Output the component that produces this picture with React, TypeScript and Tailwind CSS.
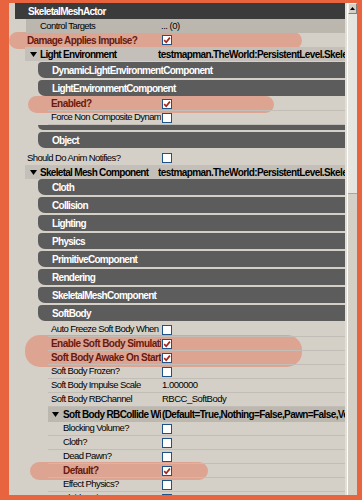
import React from 'react';

// ─── Property window (UnrealEd style) ─────────────────────────────────────────

const FONT = "font-['Liberation_Sans',Arial,sans-serif]";

function Check({ checked = false }: { checked?: boolean }) {
  return (
    <span className="flex h-[10px] w-[10px] items-center justify-center border border-[#1f5388] bg-white">
      {checked && (
        <svg width="8" height="8" viewBox="0 0 8 8">
          <path d="M1.2 4.2 L3.2 6.3 L6.9 1.6" fill="none" stroke="#a5241a" strokeWidth="1.7" />
        </svg>
      )}
    </span>
  );
}

function Tri() {
  return (
    <svg width="7" height="5" viewBox="0 0 7 5" className="shrink-0">
      <path d="M0 0 H7 L3.5 5 Z" fill="#000" />
    </svg>
  );
}

function Tab({ label }: { label: string }) {
  return (
    <div className="ml-[29px] flex h-[16px] items-center rounded-tl-[4px] rounded-bl-[7px] bg-[#5c5c5c] pl-[14px] text-[10px] font-bold tracking-[-0.7px] text-white">
      {label}
    </div>
  );
}

// Level-1 / level-2 property rows share the same left edge (x=48)
function Prop({
  label,
  deep = false,
  hot = false,
  children,
}: {
  label: string;
  deep?: boolean;
  hot?: boolean;
  children?: React.ReactNode;
}) {
  return (
    <div className="ml-[39px] flex h-[14px] items-center border-b border-[#c2beb7]">
      <div
        className={`w-[113px] overflow-hidden whitespace-nowrap ${deep ? 'pl-[15px]' : 'pl-[3px]'} ${
          hot ? 'text-[10px] font-bold tracking-[-0.55px] text-[#661a10]' : 'text-[9.5px] tracking-[-0.6px] text-black'
        }`}
      >
        {label}
      </div>
      <div className="flex flex-1 items-center overflow-hidden whitespace-nowrap pl-[1px] text-[9.5px] tracking-[-0.5px] text-black">
        {children}
      </div>
    </div>
  );
}

function Category({ label, value }: { label: string; value: string }) {
  return (
    <div className="ml-[16px] flex h-[14px] items-center bg-[#c4c0b9]">
      <div className="flex w-[133px] items-center gap-[3px] overflow-hidden whitespace-nowrap pl-[5px] text-[10px] font-bold tracking-[-0.7px] text-black">
        <Tri />
        {label}
      </div>
      <div className="flex-1 overflow-hidden whitespace-nowrap text-[10px] font-bold tracking-[-0.6px] text-black">
        {value}
      </div>
    </div>
  );
}

export default function App() {
  return (
    <div className={`h-[500px] w-[362px] overflow-hidden bg-[#e8643f] pt-[3px] pl-[9px] pr-[5px] ${FONT}`}>
      <div className="flex h-[492px]">
        {/* Property list */}
        <div className="relative w-[336px] overflow-hidden bg-[#d4d0c8]">
          {/* highlight marks */}
          <div className="absolute left-0 top-[29px] h-[17px] w-[293px] rounded-full bg-[rgba(235,110,80,0.45)] blur-[0.6px]" />
          <div className="absolute left-[19px] top-[93px] h-[17px] w-[246px] rounded-full bg-[rgba(235,110,80,0.45)] blur-[0.6px]" />
          <div className="absolute left-[16px] top-[332px] h-[32px] w-[277px] rounded-[15px] bg-[rgba(235,110,80,0.45)] blur-[0.6px]" />
          <div className="absolute left-[21px] top-[459px] h-[18px] w-[178px] rounded-full bg-[rgba(235,110,80,0.45)] blur-[0.6px]" />

          <div className="relative flex flex-col">
            {/* Actor header */}
            <div className="ml-[6px] flex h-[16px] items-center bg-[#3b3b3b] pl-[13px] text-[10px] font-bold tracking-[-0.7px] text-white">
              SkeletalMeshActor
            </div>

            <div className="ml-[17px] flex h-[14px] items-center bg-[#bbb7af]">
              <div className="w-[135px] pl-[14px] text-[9.5px] tracking-[-0.6px] text-black">Control Targets</div>
              <div className="text-[9.5px] tracking-[-0.5px] text-black">... (0)</div>
            </div>

            <div className="ml-[3px] flex h-[14px] items-center">
              <div className="w-[150px] overflow-hidden whitespace-nowrap pl-[15px] text-[10px] font-bold tracking-[-0.6px] text-[#661a10]">
                Damage Applies Impulse?
              </div>
              <Check checked />
            </div>

            <Category label="Light Environment" value="testmapman.TheWorld:PersistentLevel.SkeletalMeshActor_0" />

            <div className="mt-[1px] flex flex-col gap-[2px]">
              <Tab label="DynamicLightEnvironmentComponent" />
              <Tab label="LightEnvironmentComponent" />
            </div>

            <div className="mt-[1px] flex flex-col">
              <Prop label="Enabled?" hot>
                <Check checked />
              </Prop>
              <Prop label="Force Non Composite Dynami">
                <Check />
              </Prop>
            </div>

            <div className="ml-[29px] h-[5px] rounded-bl-[5px] bg-[#5c5c5c]" />
            <div className="mt-[2px]">
              <Tab label="Object" />
            </div>

            <div className="mt-[3px] ml-[3px] flex h-[14px] items-center">
              <div className="w-[150px] overflow-hidden whitespace-nowrap pl-[15px] text-[9.5px] tracking-[-0.6px] text-black">
                Should Do Anim Notifies?
              </div>
              <Check />
            </div>

            <Category label="Skeletal Mesh Component" value="testmapman.TheWorld:PersistentLevel.SkeletalMeshActor_0" />

            <div className="flex flex-col gap-[2px]">
              <Tab label="Cloth" />
              <Tab label="Collision" />
              <Tab label="Lighting" />
              <Tab label="Physics" />
              <Tab label="PrimitiveComponent" />
              <Tab label="Rendering" />
              <Tab label="SkeletalMeshComponent" />
              <Tab label="SoftBody" />
            </div>

            <div className="mt-[2px] flex flex-col">
              <Prop label="Auto Freeze Soft Body When">
                <Check />
              </Prop>
              <Prop label="Enable Soft Body Simulati" hot>
                <Check checked />
              </Prop>
              <Prop label="Soft Body Awake On Start" hot>
                <Check checked />
              </Prop>
              <Prop label="Soft Body Frozen?">
                <Check />
              </Prop>
              <Prop label="Soft Body Impulse Scale">1.000000</Prop>
              <Prop label="Soft Body RBChannel">RBCC_SoftBody</Prop>

              <div className="ml-[39px] flex h-[15px] items-center bg-[#bcb8b0]">
                <div className="flex w-[113px] items-center gap-[4px] overflow-hidden whitespace-nowrap pl-[4px] text-[10px] font-bold tracking-[-0.65px] text-black">
                  <Tri />
                  Soft Body RBCollide Wi
                </div>
                <div className="flex-1 overflow-hidden whitespace-nowrap pl-[1px] text-[10px] font-bold tracking-[-0.6px] text-black">
                  (Default=True,Nothing=False,Pawn=False,Vehicle=False)
                </div>
              </div>

              <Prop label="Blocking Volume?" deep>
                <Check />
              </Prop>
              <Prop label="Cloth?" deep>
                <Check />
              </Prop>
              <Prop label="Dead Pawn?" deep>
                <Check />
              </Prop>
              <Prop label="Default?" deep hot>
                <Check checked />
              </Prop>
              <Prop label="Effect Physics?" deep>
                <Check />
              </Prop>
              <Prop label="Fluid Drain?" deep>
                <Check />
              </Prop>
            </div>
          </div>
        </div>

        {/* divider */}
        <div className="w-[3px] border-r border-white bg-[#e2dfd9]" />

        {/* Scrollbar */}
        <div className="flex w-[9px] flex-col bg-[#d4d0c8]">
          <div className="flex h-[11px] items-center justify-center border border-[#f4f2ee] border-r-[#808080] border-b-[#808080] bg-[#d4d0c8]">
            <svg width="5" height="3" viewBox="0 0 5 3">
              <path d="M0 3 H5 L2.5 0 Z" fill="#000" />
            </svg>
          </div>
          <div className="h-[179px] bg-[#e7e5e0]" />
          <div className="flex-1 border-t border-[#a9a59e] bg-[#d4d0c8]" />
        </div>
      </div>
    </div>
  );
}
